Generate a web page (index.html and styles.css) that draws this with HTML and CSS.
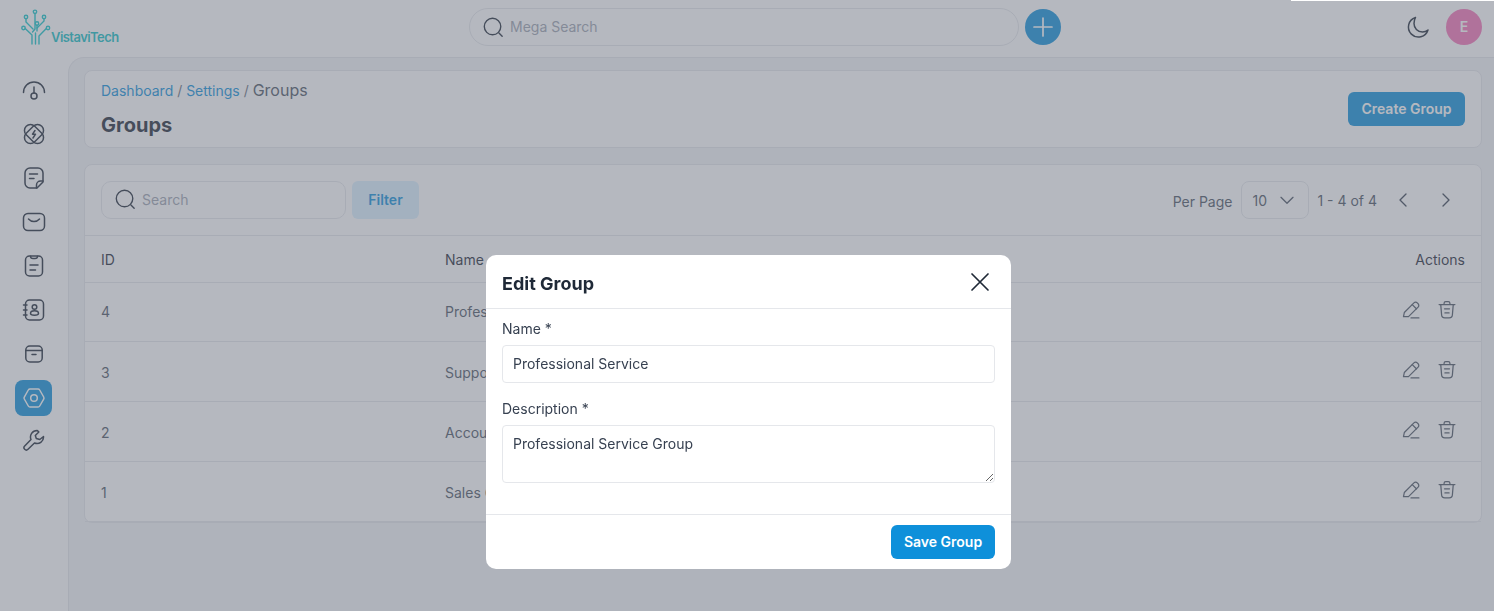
FILE: index.html
```html
<!DOCTYPE html>
<html lang="en">
<head>
  <meta charset="UTF-8">
  <title>Groups</title>
  <link rel="stylesheet" href="styles.css">
</head>
<body>

  <header class="topbar">
    <div class="brand">
      <svg class="brand-mark" width="32" height="38" viewBox="-1 -1 32 38" fill="none" stroke="#14c4c8" stroke-width="1.4" stroke-linecap="round" stroke-linejoin="round">
        <circle cx="14" cy="2.8" r="1.7"/>
        <circle cx="5" cy="8" r="1.7"/>
        <circle cx="23" cy="8" r="1.7"/>
        <circle cx="16" cy="14.5" r="1.7"/>
        <circle cx="2.5" cy="19" r="1.7"/>
        <circle cx="27" cy="19" r="1.7"/>
        <path d="M14 4.5V20l-2.500 3"/>
        <path d="M5 9.700V13l7 7"/>
        <path d="M23 9.700V12l-7 7"/>
        <path d="M4.200 19.500 11 26v9"/>
        <path d="M25.300 19.500 18 27v8"/>
        <path d="M14.500 24v11"/>
        <path d="M16 16.200V22"/>
      </svg>
      <span class="brand-name">VistaviTech</span>
    </div>
    <label class="mega-search">
      <svg width="22" height="22" viewBox="0 0 24 24" fill="none" stroke="currentColor" stroke-width="1.5" stroke-linecap="round"><circle cx="11.500" cy="11.500" r="9"/><path d="m18.500 18.500 3.500 3.500"/></svg>
      <input type="text" placeholder="Mega Search">
    </label>
    <button class="add-btn" aria-label="Add">
      <svg width="24" height="24" viewBox="0 0 24 24" fill="none" stroke="currentColor" stroke-width="1.7" stroke-linecap="round"><path d="M12 3v18M3 12h18"/></svg>
    </button>
    <div class="topbar-right">
      <svg class="moon" width="24" height="24" viewBox="0 0 24 24" fill="none" stroke="currentColor" stroke-width="1.5" stroke-linejoin="round"><path d="M9.500 2.500A10 10 0 1 0 22 15c-1.500 1.300-3.500 2-5.500 2C11.500 17 8 13 8 8.500c0-2.200.5-4.200 1.500-6z"/></svg>
      <div class="avatar">E</div>
    </div>
  </header>

  <div class="layout">
    <nav class="sidebar">
      <a class="nav-item">
        <svg width="24" height="24" viewBox="0 0 24 24"><path d="M1.500 14.500a10.500 10.500 0 0 1 21 0"/><path d="M12 9v6"/><circle cx="12" cy="18" r="3"/></svg>
      </a>
      <a class="nav-item">
        <svg width="24" height="24" viewBox="0 0 24 24"><rect x="1" y="6" width="22" height="12" rx="6" transform="rotate(45 12 12)"/><rect x="1" y="6" width="22" height="12" rx="6" transform="rotate(-45 12 12)"/><path d="m13 8.500-2.500 3.700h3L11 16"/></svg>
      </a>
      <a class="nav-item">
        <svg width="24" height="24" viewBox="0 0 24 24"><path d="M15 22H8a5 5 0 0 1-5-5V7a5 5 0 0 1 5-5h8a5 5 0 0 1 5 5v9z"/><path d="M21 15h-2.500a4 4 0 0 0-4 4v3"/><path d="M7.500 8h8M7.500 12.500h4.500"/></svg>
      </a>
      <a class="nav-item">
        <svg width="24" height="24" viewBox="0 0 24 24"><rect x="1.500" y="3.500" width="21" height="17" rx="4.500"/><path d="M6.500 9c3 3.400 8 3.400 11 0"/></svg>
      </a>
      <a class="nav-item">
        <svg width="24" height="24" viewBox="0 0 24 24"><rect x="3.500" y="2" width="17" height="20" rx="4"/><path d="M8.500 2.200c0 1.500 1 2.300 2.500 2.300h2c1.500 0 2.500-.8 2.500-2.300"/><path d="M8 11h8M8 16h5.500"/></svg>
      </a>
      <a class="nav-item">
        <svg width="24" height="24" viewBox="0 0 24 24"><rect x="3.500" y="2" width="18" height="20" rx="4"/><circle cx="12.500" cy="9" r="2.300"/><path d="M8.500 15.500c0-1.700 1.800-2.700 4-2.700s4 1 4 2.700-1.800 1.700-4 1.700-4 0-4-1.700z"/><path d="M1.500 7h3.500M1.500 12h3.500M1.500 17h3.500"/></svg>
      </a>
      <a class="nav-item">
        <svg width="24" height="24" viewBox="0 0 24 24"><rect x="3.800" y="4" width="16.400" height="16" rx="4"/><path d="M3.800 8.500h16.400M10 12.500h4"/></svg>
      </a>
      <a class="nav-item is-active">
        <svg width="24" height="24" viewBox="0 0 24 24"><path d="M8 3h8a2 2 0 0 1 1.700 1l4 7a2 2 0 0 1 0 2l-4 7a2 2 0 0 1-1.700 1H8a2 2 0 0 1-1.700-1l-4-7a2 2 0 0 1 0-2l4-7A2 2 0 0 1 8 3z"/><circle cx="12" cy="12" r="3.300"/></svg>
      </a>
      <a class="nav-item nav-last">
        <svg width="24" height="24" viewBox="0 0 24 24"><path d="M15 2.500a6.500 6.500 0 0 0-6 9L2.700 18a2.300 2.300 0 0 0 3.300 3.300l6.500-6.300a6.500 6.500 0 0 0 9-6.500l-3.700 3-3.500-1-1-3 3.500-3.500A6 6 0 0 0 15 2.500z"/></svg>
      </a>
    </nav>

    <main class="content">
      <section class="card page-head">
        <div>
          <div class="crumbs"><a>Dashboard</a> <span class="sep">/</span> <a>Settings</a> <span class="sep">/</span> <span class="current">Groups</span></div>
          <h1>Groups</h1>
        </div>
        <button class="btn-primary">Create Group</button>
      </section>

      <section class="card">
        <div class="toolbar">
          <label class="table-search">
            <svg width="22" height="22" viewBox="0 0 24 24" fill="none" stroke="currentColor" stroke-width="1.5" stroke-linecap="round"><circle cx="11.500" cy="11.500" r="9"/><path d="m18.500 18.500 3.500 3.500"/></svg>
            <input type="text" placeholder="Search">
          </label>
          <button class="btn-soft">Filter</button>
          <div class="pager">
            <span class="per-page">Per Page</span>
            <div class="page-size">
              <span>10</span>
              <svg width="16" height="16" viewBox="0 0 24 24" fill="none" stroke="currentColor" stroke-width="2" stroke-linecap="round" stroke-linejoin="round"><path d="m3 8 9 9 9-9"/></svg>
            </div>
            <span class="range">1 - 4 of 4</span>
            <button class="page-btn" aria-label="Previous">
              <svg width="16" height="16" viewBox="0 0 24 24" fill="none" stroke="currentColor" stroke-width="2" stroke-linecap="round" stroke-linejoin="round"><path d="m15 3-9 9 9 9"/></svg>
            </button>
            <button class="page-btn" aria-label="Next">
              <svg width="16" height="16" viewBox="0 0 24 24" fill="none" stroke="currentColor" stroke-width="2" stroke-linecap="round" stroke-linejoin="round"><path d="m9 3 9 9-9 9"/></svg>
            </button>
          </div>
        </div>

        <table class="groups">
          <thead>
            <tr><th class="col-id">ID</th><th class="col-name">Name</th><th class="col-desc">Description</th><th class="col-actions">Actions</th></tr>
          </thead>
          <tbody>
            <tr><td>4</td><td>Professional Service</td><td>Professional Service Group</td><td class="cell-actions"><div class="row-actions"><button aria-label="Edit"><svg width="20" height="20" viewBox="0 0 24 24"><path d="M3 20l1-5L15.500 3.500a2.800 2.800 0 0 1 4 0l1 1a2.800 2.800 0 0 1 0 4L9 20z"/><path d="M13.500 5.500l5 5M12 21.500h9.500"/></svg></button><button aria-label="Delete"><svg width="20" height="20" viewBox="0 0 24 24"><path d="M2.500 5.500h19M8.500 5.500V4a2 2 0 0 1 2-2h3a2 2 0 0 1 2 2v1.500"/><path d="M4.500 5.500l1 12a4 4 0 0 0 4 4h5a4 4 0 0 0 4-4l1-12"/><path d="M9 10.500h6M9.500 15.500h5"/></svg></button></div></td></tr>
            <tr><td>3</td><td>Support</td><td>Support Group</td><td class="cell-actions"><div class="row-actions"><button aria-label="Edit"><svg width="20" height="20" viewBox="0 0 24 24"><path d="M3 20l1-5L15.500 3.500a2.800 2.800 0 0 1 4 0l1 1a2.800 2.800 0 0 1 0 4L9 20z"/><path d="M13.500 5.500l5 5M12 21.500h9.500"/></svg></button><button aria-label="Delete"><svg width="20" height="20" viewBox="0 0 24 24"><path d="M2.500 5.500h19M8.500 5.500V4a2 2 0 0 1 2-2h3a2 2 0 0 1 2 2v1.500"/><path d="M4.500 5.500l1 12a4 4 0 0 0 4 4h5a4 4 0 0 0 4-4l1-12"/><path d="M9 10.500h6M9.500 15.500h5"/></svg></button></div></td></tr>
            <tr><td>2</td><td>Accounting</td><td>Accounting Group</td><td class="cell-actions"><div class="row-actions"><button aria-label="Edit"><svg width="20" height="20" viewBox="0 0 24 24"><path d="M3 20l1-5L15.500 3.500a2.800 2.800 0 0 1 4 0l1 1a2.800 2.800 0 0 1 0 4L9 20z"/><path d="M13.500 5.500l5 5M12 21.500h9.500"/></svg></button><button aria-label="Delete"><svg width="20" height="20" viewBox="0 0 24 24"><path d="M2.500 5.500h19M8.500 5.500V4a2 2 0 0 1 2-2h3a2 2 0 0 1 2 2v1.500"/><path d="M4.500 5.500l1 12a4 4 0 0 0 4 4h5a4 4 0 0 0 4-4l1-12"/><path d="M9 10.500h6M9.500 15.500h5"/></svg></button></div></td></tr>
            <tr><td>1</td><td>Sales Group</td><td>Sales Group</td><td class="cell-actions"><div class="row-actions"><button aria-label="Edit"><svg width="20" height="20" viewBox="0 0 24 24"><path d="M3 20l1-5L15.500 3.500a2.800 2.800 0 0 1 4 0l1 1a2.800 2.800 0 0 1 0 4L9 20z"/><path d="M13.500 5.500l5 5M12 21.500h9.500"/></svg></button><button aria-label="Delete"><svg width="20" height="20" viewBox="0 0 24 24"><path d="M2.500 5.500h19M8.500 5.500V4a2 2 0 0 1 2-2h3a2 2 0 0 1 2 2v1.500"/><path d="M4.500 5.500l1 12a4 4 0 0 0 4 4h5a4 4 0 0 0 4-4l1-12"/><path d="M9 10.500h6M9.500 15.500h5"/></svg></button></div></td></tr>
          </tbody>
        </table>
      </section>
    </main>
  </div>

  <div class="overlay">
    <div class="modal">
      <div class="modal-head">
        <h2>Edit Group</h2>
        <button class="modal-close" aria-label="Close">
          <svg width="20" height="20" viewBox="0 0 20 20" fill="none" stroke="currentColor" stroke-width="1.700" stroke-linecap="round"><path d="m2 2 16 16M18 2 2 18"/></svg>
        </button>
      </div>
      <div class="modal-body">
        <label class="field-label" for="groupName">Name *</label>
        <input class="field" id="groupName" type="text" value="Professional Service">
        <label class="field-label second" for="groupDesc">Description *</label>
        <textarea class="field area" id="groupDesc">Professional Service Group</textarea>
      </div>
      <div class="modal-foot">
        <button class="btn-save">Save Group</button>
      </div>
    </div>
  </div>
  <div class="top-strip"></div>

</body>
</html>
```

FILE: styles.css
```css
* {
  box-sizing: border-box;
}

html, body {
  height: 100%;
}

body {
  margin: 0;
  font-family: Inter, "Liberation Sans", sans-serif;
  font-size: 14px;
  color: #1f2937;
  background-color: #fff;
  overflow: hidden;
}

button {
  font-family: inherit;
  cursor: pointer;
}

/* barra superior */
.topbar {
  display: flex;
  align-items: center;
  height: 57px;
  padding: 0 12px 4px 0;
  background-color: #fff;
}

.brand {
  display: flex;
  align-items: flex-end;
  width: 469px;
  padding-left: 20px;
}

.brand-mark {
  flex-shrink: 0;
}

.brand-name {
  margin-left: -1px;
  margin-bottom: 1px;
  font-size: 13px;
  font-weight: 600;
  letter-spacing: -.55px;
  color: #14bfc4;
}

.mega-search {
  display: flex;
  align-items: center;
  gap: 4px;
  width: 550px;
  height: 38px;
  padding-left: 12px;
  border: 1px solid #e5e7eb;
  border-radius: 19px;
  color: #1f2937;
}

.mega-search input,
.table-search input {
  flex: 1;
  min-width: 0;
  border: none;
  outline: none;
  background: none;
  font-family: inherit;
  font-size: 14px;
  color: #1f2937;
}

.table-search input {
  padding-top: 1px;
  padding-bottom: 1px;
}

.mega-search input::placeholder,
.table-search input::placeholder {
  color: #9ca3af;
}

.add-btn {
  display: flex;
  align-items: center;
  justify-content: center;
  width: 36px;
  height: 36px;
  margin-left: 6px;
  padding: 0;
  border: none;
  border-radius: 50%;
  background-color: #0e90da;
  color: #fff;
}

.topbar-right {
  display: flex;
  align-items: center;
  gap: 16px;
  margin-left: auto;
}

.moon {
  color: #1f2937;
}

.avatar {
  display: flex;
  align-items: center;
  justify-content: center;
  width: 36px;
  height: 36px;
  border-radius: 50%;
  background-color: #f472b6;
  color: #fff;
  font-size: 14px;
  font-weight: 600;
}

.layout {
  display: flex;
  height: calc(100% - 57px);
}

/* menu lateral */
.sidebar {
  display: flex;
  flex-direction: column;
  align-items: center;
  gap: 8px;
  width: 68px;
  flex-shrink: 0;
  padding: 15px 1px 0 0;
}

.nav-item {
  display: flex;
  align-items: center;
  justify-content: center;
  width: 37px;
  height: 36px;
  border-radius: 8px;
  color: #1f2937;
}

.nav-item svg {
  fill: none;
  stroke: currentColor;
  stroke-width: 1.5;
  stroke-linecap: round;
  stroke-linejoin: round;
}

.nav-item.is-active {
  background-color: #0e90da;
  color: #fff;
}

.nav-item.nav-last {
  margin-top: -2px;
}

.content {
  flex: 1;
  padding: 12px 12px 0 15px;
  background-color: #f3f4f6;
  border-top: 1px solid #e5e7eb;
  border-left: 1px solid #e5e7eb;
  border-top-left-radius: 16px;
}

.card {
  margin-bottom: 16px;
  background-color: #fff;
  border: 1px solid #e5e7eb;
  border-radius: 8px;
}

.page-head {
  display: flex;
  align-items: center;
  justify-content: space-between;
  height: 78px;
  padding: 0 16px;
}

.crumbs {
  font-size: 14px;
  line-height: 20px;
  color: #0e90da;
}

.crumbs .sep {
  color: #6b7280;
}

.crumbs .current {
  font-size: 16px;
  color: #4b5563;
}

h1 {
  margin: 10px 0 0;
  font-size: 20px;
  line-height: 28px;
  font-weight: 700;
  color: #1f2937;
}

.btn-primary {
  height: 34px;
  width: 117px;
  padding: 0 0 2px;
  border: none;
  border-radius: 6px;
  background-color: #0e90da;
  color: #fff;
  font-size: 14px;
  font-weight: 600;
}

.toolbar {
  display: flex;
  align-items: center;
  gap: 6px;
  height: 71px;
  padding: 0 16px;
  border-bottom: 1px solid #e5e7eb;
}

.table-search {
  display: flex;
  align-items: center;
  gap: 4px;
  width: 245px;
  height: 38px;
  padding: 0 0 2px 12px;
  border: 1px solid #e5e7eb;
  border-radius: 10px;
  color: #1f2937;
}

.btn-soft {
  width: 67px;
  height: 38px;
  padding: 0 0 2px;
  border: none;
  border-radius: 6px;
  background-color: #dbf0fe;
  color: #0e90da;
  font-size: 14px;
  font-weight: 600;
}

.pager {
  display: flex;
  align-items: center;
  margin-left: auto;
  color: #4b5563;
}

.page-size {
  display: flex;
  align-items: center;
  justify-content: space-between;
  width: 68px;
  height: 38px;
  margin: 0 8px;
  padding: 0 13px 0 10px;
  border: 1px solid #e5e7eb;
  border-radius: 8px;
}

.per-page {
  margin-top: 2px;
  margin-right: 1px;
}

.page-btn {
  display: flex;
  align-items: center;
  justify-content: center;
  width: 40px;
  height: 36px;
  padding: 0;
  border: none;
  background: none;
  color: #374151;
}

.page-btn:last-child {
  width: 41px;
}

.range {
  margin-right: 7px;
}

/* tabla */
.groups {
  width: 100%;
  border-spacing: 0;
  table-layout: fixed;
}

.groups th,
.groups td {
  padding: 0 16px;
  text-align: left;
  font-size: 14px;
  border-bottom: 1px solid #e5e7eb;
}

.groups th {
  height: 47px;
  font-weight: 400;
  color: #1f2937;
}

.groups th.col-desc {
  padding-top: 3px;
}

.groups td {
  height: 60px;
  padding-top: 2px;
  color: #4b5563;
}

.groups td.cell-actions {
  padding-top: 0;
}

.groups tbody tr:first-child td {
  height: 59px;
  padding-top: 0;
  padding-bottom: 2px;
}

.groups tbody tr:first-child td.cell-actions {
  padding-bottom: 0;
}

.col-id,
.col-name {
  width: 344px;
}

.groups .col-actions {
  width: 140px;
  text-align: right;
}

.row-actions {
  display: flex;
  justify-content: flex-end;
  margin-bottom: 4px;
}

.row-actions button {
  display: flex;
  align-items: center;
  justify-content: center;
  width: 36px;
  height: 36px;
  padding: 0;
  border: none;
  background: none;
  color: #4b5563;
}

.row-actions svg {
  fill: none;
  stroke: currentColor;
  stroke-width: 1.5;
  stroke-linecap: round;
  stroke-linejoin: round;
}

/* ventana modal */
.overlay {
  position: fixed;
  inset: 0;
  display: flex;
  justify-content: center;
  align-items: flex-start;
  padding: 255px 0 0 3px;
  background-color: rgba(107, 114, 128, .5);
}

.top-strip {
  position: fixed;
  top: 0;
  right: 0;
  width: 203px;
  height: 1px;
  background-color: #fff;
}

.modal {
  width: 525px;
  background-color: #fff;
  border-radius: 10px;
}

.modal-head {
  display: flex;
  align-items: center;
  justify-content: space-between;
  height: 54px;
  padding: 0 21px 0 16px;
  border-bottom: 1px solid #e5e7eb;
}

h2 {
  margin: 3px 0 0;
  font-size: 18px;
  font-weight: 700;
  color: #1f2937;
}

.modal-close {
  display: flex;
  padding: 0;
  border: none;
  background: none;
  color: #1f2937;
}

.modal-body {
  padding: 10px 16px 31px;
}

.field-label {
  display: block;
  margin-bottom: 6px;
  font-size: 14px;
  line-height: 20px;
  color: #374151;
}

.field-label.second {
  margin-top: 16px;
}

.field {
  display: block;
  width: 100%;
  height: 38px;
  padding: 0 10px 2px;
  border: 1px solid #e5e7eb;
  border-radius: 4px;
  outline: none;
  font-family: inherit;
  font-size: 14px;
  color: #374151;
}

.area {
  height: 58px;
  padding-top: 8px;
  line-height: 20px;
}

.modal-foot {
  display: flex;
  justify-content: flex-end;
  padding: 10px 16px;
  border-top: 1px solid #e5e7eb;
}

.btn-save {
  width: 104px;
  height: 34px;
  padding: 0 0 2px;
  border: none;
  border-radius: 6px;
  background-color: #0e90da;
  color: #fff;
  font-size: 14px;
  font-weight: 600;
}
```
